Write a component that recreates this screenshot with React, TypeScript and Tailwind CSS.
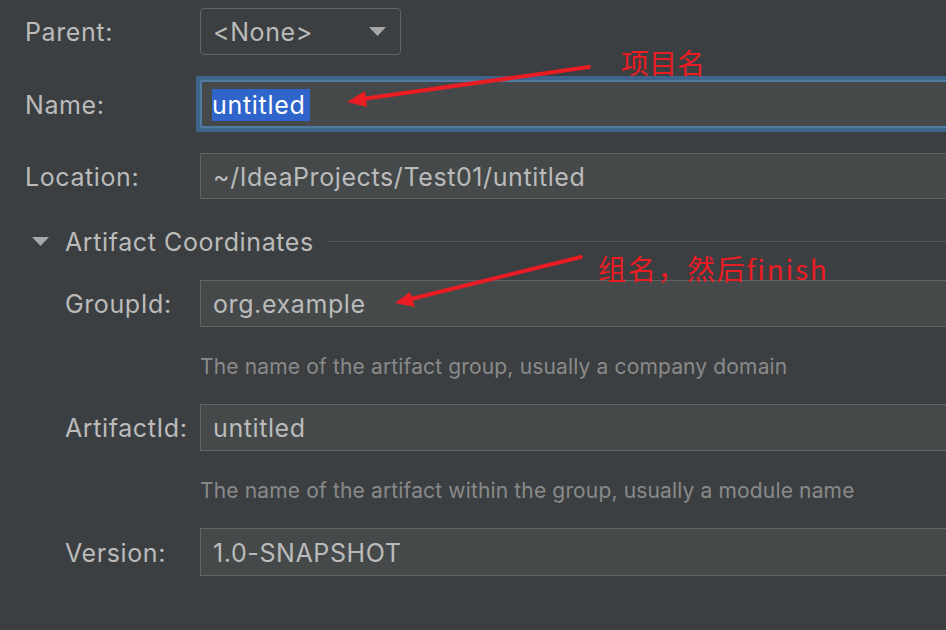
const font = { fontFamily: "Inter, 'Noto Sans', sans-serif" };

function Label({ text, indent }: { text: string; indent?: boolean }) {
  return (
    <div
      className={`shrink-0 pt-[3px] text-[25px] tracking-[0.6px] text-[#bbbbbb] ${indent ? "w-[135px]" : "w-[175px]"}`}
    >
      {text}
    </div>
  );
}

function Field({ value, h }: { value: string; h: string }) {
  return (
    <div
      className={`flex w-[800px] shrink-0 items-center border border-[#646464] bg-[#45494a] pl-[12px] pt-[3px] text-[25px] tracking-[0.6px] text-[#bbbbbb] ${h}`}
    >
      {value}
    </div>
  );
}

function Hint({ text }: { text: string }) {
  return (
    <div className="flex h-[24px] items-center pl-[200px] pt-[2px] text-[21px] tracking-[0.15px] text-[#8a8a8a]">
      {text}
    </div>
  );
}

function Arrow({ x1, y1, x2, y2, w1, w2 }: { x1: number; y1: number; x2: number; y2: number; w1: [number, number]; w2: [number, number] }) {
  return (
    <g>
      <line x1={x1} y1={y1} x2={x2 + 8} y2={y2 - 2} stroke="#ea1c24" strokeWidth={4} strokeLinecap="round" />
      <polygon points={`${x2},${y2} ${w1[0]},${w1[1]} ${w2[0]},${w2[1]}`} fill="#ea1c24" />
    </g>
  );
}

export default function App() {
  return (
    <div className="relative h-[630px] w-[946px] overflow-hidden bg-[#3c3f41]" style={font}>
      <div className="flex flex-col pt-[8px]">
        {/* Parent */}
        <div className="flex h-[47px] items-center pl-[25px]">
          <Label text="Parent:" />
          <div className="flex h-[47px] w-[201px] items-center justify-between rounded-[4px] border border-[#646464] pl-[12px] pr-[14px] text-[25px] tracking-[0.6px] text-[#bbbbbb]">
            <span className="pt-[3px]">&lt;None&gt;</span>
            <svg width="17" height="9" viewBox="0 0 17 9">
              <polygon points="0,0 17,0 8.5,9" fill="#a6a6a6" />
            </svg>
          </div>
        </div>

        {/* Name */}
        <div className="mt-[25px] flex h-[48px] items-center pl-[25px]">
          <Label text="Name:" />
          <div className="flex h-[48px] w-[800px] shrink-0 items-center border-2 border-[#5079a3] bg-[#45494a] pl-[10px] pt-[2px] text-[25px] tracking-[0.7px] shadow-[0_0_0_4px_#3f648c]">
            <span className="bg-[#2f65ca] pr-[4px] leading-[32px] text-white">untitled</span>
          </div>
        </div>

        {/* Location */}
        <div className="mt-[25px] flex h-[46px] items-center pl-[25px]">
          <Label text="Location:" />
          <Field value="~/IdeaProjects/Test01/untitled" h="h-[46px]" />
        </div>

        {/* Artifact Coordinates */}
        <div className="mt-[30px] flex h-[24px] items-center pl-[32px]">
          <svg width="17" height="9" viewBox="0 0 17 9" className="mr-[16px]">
            <polygon points="0,0 17,0 8.5,9" fill="#a9a9a9" />
          </svg>
          <span className="pt-[3px] text-[25px] tracking-[0.6px] text-[#bbbbbb]">Artifact Coordinates</span>
          <div className="ml-[14px] h-px flex-1 bg-[#53575a]" />
        </div>

        {/* GroupId */}
        <div className="mt-[27px] flex h-[47px] items-center pl-[65px]">
          <Label text="GroupId:" indent />
          <Field value="org.example" h="h-[47px]" />
        </div>
        <div className="mt-[27px]">
          <Hint text="The name of the artifact group, usually a company domain" />
        </div>

        {/* ArtifactId */}
        <div className="mt-[26px] flex h-[47px] items-center pl-[65px]">
          <Label text="ArtifactId:" indent />
          <Field value="untitled" h="h-[47px]" />
        </div>
        <div className="mt-[27px]">
          <Hint text="The name of the artifact within the group, usually a module name" />
        </div>

        {/* Version */}
        <div className="mt-[26px] flex h-[48px] items-center pl-[65px]">
          <Label text="Version:" indent />
          <Field value="1.0-SNAPSHOT" h="h-[48px]" />
        </div>
      </div>

      {/* annotations */}
      <svg className="pointer-events-none absolute left-0 top-0" width="946" height="630">
        <Arrow x1={589} y1={67} x2={347} y2={102} w1={[365, 91]} w2={[367, 107]} />
        <Arrow x1={581} y1={257} x2={395} y2={303} w1={[410, 292]} w2={[415, 307]} />
      </svg>
      <div
        className="absolute left-[621px] top-[44px] text-[28px] leading-[36px] text-[#ea1c24]"
        style={{ fontFamily: "'Noto Sans CJK SC', sans-serif" }}
      >
        项目名
      </div>
      <div
        className="absolute left-[598px] top-[250px] text-[28px] leading-[36px] tracking-[1.7px] text-[#ea1c24]"
        style={{ fontFamily: "'Noto Sans CJK SC', sans-serif" }}
      >
        组名，然后finish
      </div>
    </div>
  );
}
